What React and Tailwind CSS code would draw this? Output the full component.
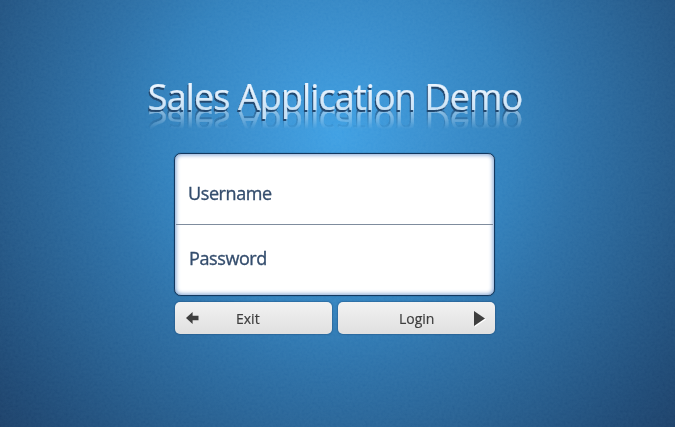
function Grain() {
  return (
    <svg className="pointer-events-none absolute inset-0 h-full w-full opacity-15 mix-blend-soft-light" aria-hidden="true">
      <filter id="grain">
        <feTurbulence type="fractalNoise" baseFrequency="0.38" numOctaves="3" seed="4" />
        <feColorMatrix type="saturate" values="0" />
        <feComponentTransfer>
          <feFuncA type="linear" slope="0" intercept="1" />
        </feComponentTransfer>
      </filter>
      <rect width="100%" height="100%" filter="url(#grain)" />
    </svg>
  );
}

function Title() {
  return (
    <div className="[-webkit-box-reflect:below_-22px_linear-gradient(to_top,transparent_0,transparent_11px,rgba(0,0,0,0.6)_11px,transparent_30px)]">
      <h1 className="bg-linear-to-b from-[#eaf4fe] from-30% to-[#c5e1f6] to-80% bg-clip-text font-['Open_Sans','Noto_Sans',sans-serif] text-[36px] leading-[48px] font-normal tracking-[-0.9px] whitespace-nowrap text-transparent drop-shadow-[-1px_2px_0.5px_#23486e] [-webkit-text-stroke:0.2px_#dcecfa]">
        Sales Application Demo
      </h1>
    </div>
  );
}

function Field({ label, className }) {
  return (
    <div className={`flex ${className}`}>
      <span className="font-['Open_Sans','Noto_Sans',sans-serif] text-[18px] leading-6 tracking-[-0.4px] text-[#344d6d] [-webkit-text-stroke:0.35px_#344d6d]">
        {label}
      </span>
    </div>
  );
}

function Button({ children }) {
  return (
    <button className="flex h-8 w-[157px] items-center rounded-[5px] bg-linear-to-b from-[#f2f2f2] to-[#e0e0e0] font-['Open_Sans','Noto_Sans',sans-serif] text-[14px] tracking-[0px] text-[#3e3e3e] shadow-[0_0_1px_1px_rgba(28,72,115,0.35)] [-webkit-text-stroke:0.2px_#3e3e3e]">
      {children}
    </button>
  );
}

export default function App() {
  return (
    <main className="relative h-[427px] w-[675px] overflow-hidden bg-[radial-gradient(circle_at_337px_135px,#3e9fe3_0px,#398fcf_90px,#3180bc_175px,#2c6fa6_240px,#265d8e_320px,#1f4a76_400px,#1b3b62_470px)]">
      <Grain />
      <div className="relative flex flex-col items-center pt-[73px] pr-[5px]">
        <Title />
        <div className="mt-8 mr-px flex w-[321px] flex-col">
          <section className="h-[143px] rounded-[7px] border border-[#12385f] bg-white shadow-[inset_0_0_4px_1px_#7ba0d2,0_0_1px_#12385f]">
            <Field label="Username" className="mx-px h-[71px] border-b border-[#7f8c9d] pt-[27px] pl-3" />
            <Field label="Password" className="mx-px h-[69px] pt-[21px] pl-[13px]" />
          </section>
          <div className="mt-1.5 flex gap-1.5 pl-px">
            <Button>
              <svg className="ml-[11px] h-3 w-[13px]" viewBox="0 0 13 12" fill="#3e3e3e" aria-hidden="true">
                <path d="M0 6 6.6 0V3.7H12.5V8.3H6.6V12Z" />
              </svg>
              <span className="ml-[37px]">Exit</span>
            </Button>
            <Button>
              <span className="ml-[61px] w-[75px] text-left">Login</span>
              <svg className="h-[15px] w-3 drop-shadow-[1px_1px_0_#ffffff]" viewBox="0 0 12 15" fill="#3e3e3e" aria-hidden="true">
                <path d="M0 0 11 7.5 0 15Z" />
              </svg>
            </Button>
          </div>
        </div>
      </div>
    </main>
  );
}
